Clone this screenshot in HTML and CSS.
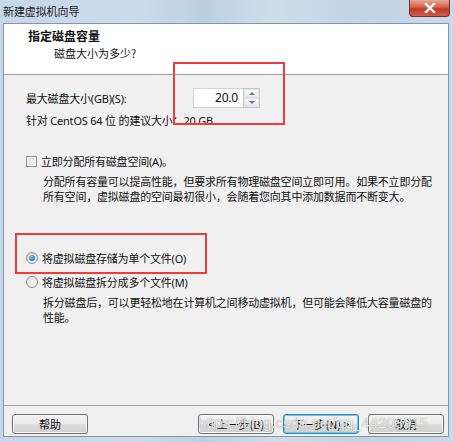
FILE: index.html
```html
<!DOCTYPE html>
<html lang="zh-CN">
<head>
    <meta charset="UTF-8">
    <title>新建虚拟机向导</title>
    <link rel="stylesheet" href="styles.css">
</head>
<body>
    <div class="window">
        <div class="titlebar">
            <span class="title">新建虚拟机向导</span>
            <div class="close-btn">
                <svg width="14" height="10" viewBox="0 0 14 10">
                    <path d="M3 1 L11 9 M11 1 L3 9" stroke="#fff" stroke-width="2.4" stroke-linecap="square"/>
                </svg>
            </div>
        </div>
        <div class="client">
            <div class="header">
                <div class="header-title">指定磁盘容量</div>
                <div class="header-sub">磁盘大小为多少?</div>
            </div>
            <div class="content">
                <div class="size-row">
                    <label class="size-label">最大磁盘大小(GB)(S):</label>
                    <div class="spinner">
                        <div class="spin-value">20.0</div>
                        <div class="spin-btns">
                            <div class="spin-btn"><span class="arrow up"></span></div>
                            <div class="spin-btn"><span class="arrow down"></span></div>
                        </div>
                    </div>
                </div>
                <div class="hint">针对 CentOS 64 位 的建议大小：20 GB</div>

                <div class="option check-row">
                    <span class="checkbox"></span>
                    <span>立即分配所有磁盘空间(A)。</span>
                </div>
                <div class="desc">
                    分配所有容量可以提高性能，但要求所有物理磁盘空间立即可用。如果不立即分配<br>
                    所有空间，虚拟磁盘的空间最初很小，会随着您向其中添加数据而不断变大。
                </div>

                <div class="option radio-row first">
                    <span class="radio checked"></span>
                    <span>将虚拟磁盘存储为单个文件(O)</span>
                </div>
                <div class="option radio-row">
                    <span class="radio"></span>
                    <span>将虚拟磁盘拆分成多个文件(M)</span>
                </div>
                <div class="desc">
                    拆分磁盘后，可以更轻松地在计算机之间移动虚拟机，但可能会降低大容量磁盘的<br>
                    性能。
                </div>
            </div>
            <div class="footer">
                <button class="btn">帮助</button>
                <button class="btn back">&lt; 上一步(B)</button>
                <button class="btn focused">下一步(N) &gt;</button>
                <button class="btn">取消</button>
            </div>
        </div>

        <div class="mark mark-size"></div>
        <div class="mark mark-single"></div>
        <div class="watermark">https://blog.csdn.net/qq_44208915</div>
    </div>
</body>
</html>
```

FILE: styles.css
```css
body {
    margin: 0;
    font-family: "Noto Sans", "Noto Sans CJK SC", sans-serif;
    font-size: 11px;
    color: #111;
}
.window {
    position: relative;
    width: 453px;
    height: 442px;
    box-sizing: border-box;
    padding: 0 4px 5px 3px;
    background: linear-gradient(90deg, #c6d7ea 0%, #cddbe9 30%, #bccfe2 45%, #d0dde9 60%, #c2d3e5 80%, #cbd9e8 100%);
    display: flex;
    flex-direction: column;
}
.titlebar {
    height: 23px;
    position: relative;
    display: flex;
    align-items: center;
}
.title {
    font-family: "Noto Sans CJK SC", sans-serif;
    font-size: 11px;
    color: #1a1a1a;
    letter-spacing: -0.1px;
    margin-top: -1px;
}
.close-btn {
    position: absolute;
    top: 0;
    right: -1px;
    width: 39px;
    height: 16px;
    border: 1px solid #7b2d25;
    border-top: none;
    border-radius: 0 0 4px 4px;
    background: linear-gradient(#e9a99a 0%, #d2604d 45%, #c0392b 55%, #cf5d45 100%);
    display: flex;
    align-items: center;
    justify-content: center;
}
.client {
    flex: 1;
    display: flex;
    flex-direction: column;
    border: 1px solid #8196ac;
    background: #f0f0f0;
}
.header {
    height: 51px;
    background: #fff;
    border-bottom: 1px solid #a0a0a0;
    box-sizing: border-box;
    padding: 4px 0 0 24px;
}
.header-title {
    font-family: "Noto Sans CJK SC", sans-serif;
    font-weight: bold;
    font-size: 12px;
    line-height: 16px;
}
.header-sub {
    font-family: "Noto Sans CJK SC", sans-serif;
    line-height: 16px;
    margin-top: 1px;
    padding-left: 26px;
}
.content {
    flex: 1;
    padding: 13px 0 0 22px;
    letter-spacing: -0.2px;
}
.size-row {
    display: flex;
    align-items: center;
    height: 20px;
}
.size-label {
    width: 167px;
}
.spinner {
    display: flex;
    height: 20px;
}
.spin-value {
    width: 50px;
    box-sizing: border-box;
    background: #fff;
    border: 1px solid #d5d5d5;
    border-right: none;
    text-align: right;
    padding-right: 5px;
    line-height: 18px;
    font-size: 12px;
}
.spin-btns {
    width: 17px;
    display: flex;
    flex-direction: column;
    border: 1px solid #c9c9c9;
    box-sizing: border-box;
    background: #f4f4f4;
}
.spin-btn {
    flex: 1;
    display: flex;
    align-items: center;
    justify-content: center;
    border: 1px solid #e2e2e2;
    background: linear-gradient(#fafafa, #e6e6e6);
}
.arrow {
    width: 0;
    height: 0;
    border-left: 3px solid transparent;
    border-right: 3px solid transparent;
}
.arrow.up {
    border-bottom: 3px solid #5d7cad;
}
.arrow.down {
    border-top: 3px solid #5d7cad;
}
.hint {
    margin-top: 5px;
    line-height: 16px;
}
.option {
    display: flex;
    align-items: center;
    gap: 4px;
    height: 16px;
}
.check-row {
    margin-top: 24px;
}
.checkbox {
    width: 11px;
    height: 11px;
    box-sizing: border-box;
    border: 1px solid #8e8f8f;
    background: linear-gradient(135deg, #dcdcdc, #fbfbfb);
    box-shadow: inset 0 0 0 1px #f4f4f4;
}
.desc {
    margin-top: 6px;
    padding-left: 17px;
    line-height: 14.5px;
}
.radio-row.first {
    margin-top: 46px;
}
.radio-row + .radio-row {
    margin-top: 8px;
}
.radio {
    width: 12px;
    height: 12px;
    box-sizing: border-box;
    border-radius: 50%;
    border: 1px solid #8e8f8f;
    background: radial-gradient(circle at 60% 60%, #f8f8f8, #d9d9d9);
    display: flex;
    align-items: center;
    justify-content: center;
}
.radio.checked::after {
    content: "";
    width: 6px;
    height: 6px;
    border-radius: 50%;
    background: radial-gradient(circle at 40% 35%, #8fd0f5, #1c6fb6 70%, #114f8e);
}
.footer {
    height: 31px;
    box-sizing: border-box;
    border-top: 1px solid #a0a0a0;
    display: flex;
    align-items: flex-start;
    gap: 9px;
    padding: 8px 4px 0 8px;
}
.btn {
    width: 76px;
    height: 20px;
    padding: 0;
    font-family: "Noto Sans CJK SC", sans-serif;
    font-size: 11px;
    color: #111;
    border: 1px solid #707070;
    border-radius: 3px;
    background: linear-gradient(#f2f2f2 0%, #ebebeb 48%, #dddddd 52%, #cfcfcf 100%);
    box-shadow: inset 0 0 0 1px #f8f8f8;
}
.btn.back {
    margin-left: auto;
}
.btn.focused {
    border-color: #3c7fb1;
    box-shadow: inset 0 0 0 1px #48d8fb;
}
.mark {
    position: absolute;
    border: 2px solid #ee3b3b;
}
.mark-size {
    left: 173px;
    top: 62px;
    width: 108px;
    height: 59px;
}
.mark-single {
    left: 15px;
    top: 233px;
    width: 188px;
    height: 37px;
}
.watermark {
    position: absolute;
    left: 198px;
    top: 414px;
    font-family: "Liberation Sans", sans-serif;
    font-size: 15px;
    color: rgba(255, 255, 255, 0.8);
    text-shadow: 0 0 1px rgba(80, 80, 80, 0.7);
    pointer-events: none;
}
```
